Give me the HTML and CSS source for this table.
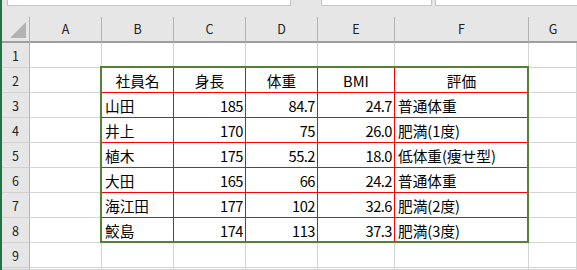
FILE: index.html
```html
<!DOCTYPE html>
<html lang="ja">
<head>
<meta charset="utf-8">
<title>社員BMI一覧</title>
<link rel="stylesheet" href="styles.css">
</head>
<body>
<div class="app">
  <div class="edge"></div>
  <div class="main">
    <div class="toolbar">
      <div class="box box-name"></div>
      <div class="box box-mid"></div>
      <div class="box box-formula"></div>
    </div>
    <div class="stack">
      <div class="sheet">
        <!-- column headers -->
        <div class="corner"><span class="tri"></span></div>
        <div class="ch">A</div><div class="ch">B</div><div class="ch">C</div><div class="ch">D</div>
        <div class="ch">E</div><div class="ch">F</div><div class="ch last">G</div>

        <!-- row 1 -->
        <div class="rh">1</div>
        <div class="c"></div><div class="c"></div><div class="c"></div><div class="c"></div><div class="c"></div><div class="c"></div><div class="c"></div>

        <!-- row 2 -->
        <div class="rh">2</div>
        <div class="c"></div>
        <div class="c t mid">社員名</div><div class="c t mid">身長</div><div class="c t mid">体重</div><div class="c t mid">BMI</div><div class="c t mid">評価</div>
        <div class="c"></div>

        <!-- row 3 -->
        <div class="rh">3</div>
        <div class="c"></div>
        <div class="c t">山田</div><div class="c t num">185</div><div class="c t num">84.7</div><div class="c t num">24.7</div><div class="c t">普通体重</div>
        <div class="c"></div>

        <!-- row 4 -->
        <div class="rh">4</div>
        <div class="c"></div>
        <div class="c t">井上</div><div class="c t num">170</div><div class="c t num">75</div><div class="c t num">26.0</div><div class="c t">肥満(1度)</div>
        <div class="c"></div>

        <!-- row 5 -->
        <div class="rh">5</div>
        <div class="c"></div>
        <div class="c t">植木</div><div class="c t num">175</div><div class="c t num">55.2</div><div class="c t num">18.0</div><div class="c t">低体重(痩せ型)</div>
        <div class="c"></div>

        <!-- row 6 -->
        <div class="rh">6</div>
        <div class="c"></div>
        <div class="c t">大田</div><div class="c t num">165</div><div class="c t num">66</div><div class="c t num">24.2</div><div class="c t">普通体重</div>
        <div class="c"></div>

        <!-- row 7 -->
        <div class="rh">7</div>
        <div class="c"></div>
        <div class="c t">海江田</div><div class="c t num">177</div><div class="c t num">102</div><div class="c t num">32.6</div><div class="c t">肥満(2度)</div>
        <div class="c"></div>

        <!-- row 8 -->
        <div class="rh">8</div>
        <div class="c"></div>
        <div class="c t">鮫島</div><div class="c t num">174</div><div class="c t num">113</div><div class="c t num">37.3</div><div class="c t">肥満(3度)</div>
        <div class="c"></div>

        <!-- row 9 -->
        <div class="rh">9</div>
        <div class="c"></div><div class="c"></div><div class="c"></div><div class="c"></div><div class="c"></div><div class="c"></div><div class="c"></div>

        <!-- row 10, only its top edge is in view -->
        <div class="rh"></div>
        <div class="c"></div><div class="c"></div><div class="c"></div><div class="c"></div><div class="c"></div><div class="c"></div><div class="c"></div>
      </div>

      <!-- border layer: outer frame of the table range B2:F8 -->
      <div class="sheet borders">
        <div class="frame"></div>
      </div>
    </div>
  </div>
</div>
</body>
</html>
```

FILE: styles.css
```css
* {
  box-sizing: border-box;
}

html, body {
  margin: 0;
  padding: 0;
  width: 577px;
  height: 270px;
  overflow: hidden;
  background: #e6e6e6;
}

body {
  font-family: "Noto Sans CJK JP", "Noto Sans", sans-serif;
  color: #000;
}

.app {
  display: flex;
  height: 270px;
  overflow: hidden;
}

.edge {
  width: 2px;
  flex: none;
  background: #217346;
}

.main {
  flex: 1;
  display: flex;
  flex-direction: column;
  min-width: 0;
}

/* formula bar strip */
.toolbar {
  height: 17px;
  flex: none;
  display: flex;
  align-items: flex-start;
  padding-left: 5px;
}

.box {
  height: 6px;
  background: #fff;
  border: 1px solid #c6c6c6;
  border-top: none;
}

.box-name {
  width: 284px;
}

.box-mid {
  width: 111px;
  margin-left: 30px;
}

.box-formula {
  flex: 1;
  margin-left: 3px;
  border-right: none;
}

/* cell layer and border layer share one grid area */
.stack {
  flex: 1;
  min-height: 0;
  display: grid;
  overflow: hidden;
}

.stack > .sheet {
  grid-area: 1 / 1;
}

/* worksheet grid */
.sheet {
  display: grid;
  grid-template-columns: 28px 72px 72px 72px 72px 77px 134px 1fr;
  grid-template-rows: 26px repeat(9, 25px) 1fr;
  background: #fff;
}

.sheet.borders {
  background: transparent;
  pointer-events: none;
}

.corner,
.ch {
  background: #e6e6e6;
  border-bottom: 2px solid #9e9e9e;
  border-right: 1px solid #b4b4b4;
}

.corner {
  display: flex;
  justify-content: flex-end;
  align-items: flex-end;
  padding: 0 3px 3px 0;
}

.tri {
  width: 16px;
  height: 16px;
  background: #b3b3b3;
  clip-path: polygon(100% 0, 100% 100%, 0 100%);
}

.ch {
  display: flex;
  align-items: center;
  justify-content: center;
  font-size: 12.5px;
  color: #222;
  padding-bottom: 1px;
}

.ch.last {
  border-right: none;
}

.rh {
  background: #e6e6e6;
  border-right: 1px solid #b4b4b4;
  border-bottom: 1px solid #d0d0d0;
  display: flex;
  align-items: center;
  justify-content: center;
  font-size: 12.5px;
  color: #222;
}

.c {
  border-right: 1px solid #d4d4d4;
  border-bottom: 1px solid #d4d4d4;
  font-size: 14.67px;
  line-height: 24px;
  padding: 1px 3px 0 3px;
  white-space: nowrap;
  overflow: hidden;
}

.c.t {
  border-right-color: #ff0000;
  border-bottom-color: #ff0000;
}

.c.mid {
  text-align: center;
}

.c.num {
  text-align: right;
  padding-right: 2px;
  letter-spacing: -0.5px;
}

.frame {
  grid-column: 3 / 8;
  grid-row: 3 / 10;
  margin: -2px 0 0 -2px;
  border: 2px solid #548235;
}
```
